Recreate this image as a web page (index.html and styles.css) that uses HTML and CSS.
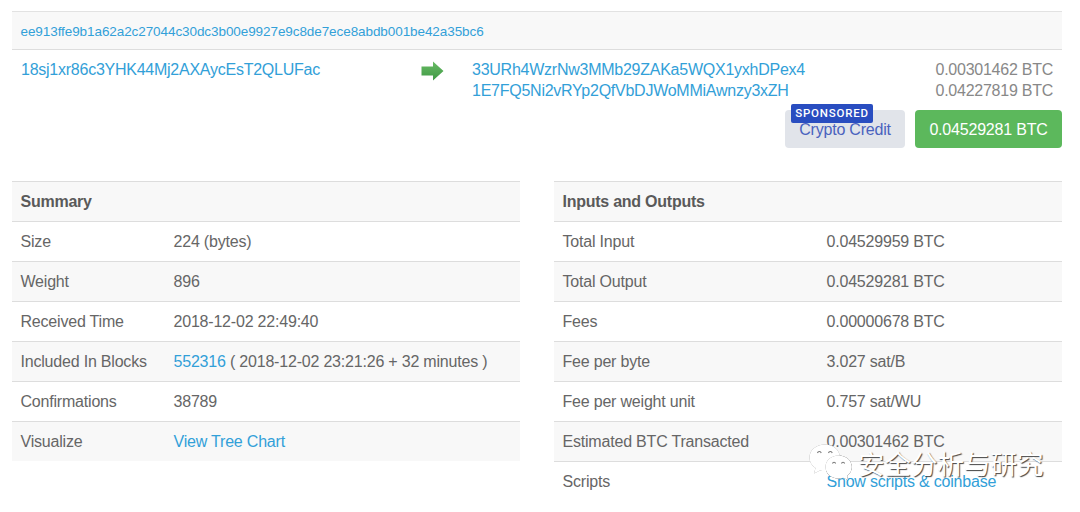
FILE: index.html
```html
<!DOCTYPE html>
<html lang="en">
<head>
<meta charset="utf-8">
<title>Transaction</title>
<link rel="stylesheet" href="styles.css">
</head>
<body>
<main class="page">
  <section class="tx">
    <div class="tx-head"><a class="hash">ee913ffe9b1a62a2c27044c30dc3b00e9927e9c8de7ece8abdb001be42a35bc6</a></div>
    <div class="tx-body">
      <div class="from"><a>18sj1xr86c3YHK44Mj2AXAycEsT2QLUFac</a></div>
      <svg class="arrow" width="24" height="22" viewBox="0 0 24 22">
        <defs><linearGradient id="g" x1="0" y1="0" x2="0" y2="1"><stop offset="0" stop-color="#68bb64"/><stop offset="1" stop-color="#3f9945"/></linearGradient></defs>
        <path d="M1.500 6.500H13V1.500L23.500 11L13 20.500V15.500H1.500Z" fill="url(#g)"/>
      </svg>
      <div class="to"><a>33URh4WzrNw3MMb29ZAKa5WQX1yxhDPex4</a><a>1E7FQ5Ni2vRYp2QfVbDJWoMMiAwnzy3xZH</a></div>
      <div class="amounts"><span>0.00301462 BTC</span><span>0.04227819 BTC</span></div>
    </div>
    <div class="actions">
      <div class="btn credit"><span class="label">Crypto Credit</span><span class="badge">SPONSORED</span></div>
      <div class="btn total">0.04529281 BTC</div>
    </div>
  </section>
  <div class="tables">
    <section class="table summary">
      <div class="row head">Summary</div>
      <div class="row"><span>Size</span><span>224 (bytes)</span></div>
      <div class="row"><span>Weight</span><span>896</span></div>
      <div class="row"><span>Received Time</span><span>2018-12-02 22:49:40</span></div>
      <div class="row"><span>Included In Blocks</span><span><a>552316</a> ( 2018-12-02 23:21:26 + 32 minutes )</span></div>
      <div class="row"><span>Confirmations</span><span>38789</span></div>
      <div class="row"><span>Visualize</span><a>View Tree Chart</a></div>
    </section>
    <section class="table io">
      <div class="row head">Inputs and Outputs</div>
      <div class="row"><span>Total Input</span><span>0.04529959 BTC</span></div>
      <div class="row"><span>Total Output</span><span>0.04529281 BTC</span></div>
      <div class="row"><span>Fees</span><span>0.00000678 BTC</span></div>
      <div class="row"><span>Fee per byte</span><span>3.027 sat/B</span></div>
      <div class="row"><span>Fee per weight unit</span><span>0.757 sat/WU</span></div>
      <div class="row"><span>Estimated BTC Transacted</span><span>0.00301462 BTC</span></div>
      <div class="row"><span>Scripts</span><a>Show scripts &amp; coinbase</a></div>
    </section>
  </div>
  <div class="watermark">
    <svg class="wechat" width="46" height="38" viewBox="0 0 46 38">
      <g class="bubbles" fill="#fff">
        <path d="M17 1.500C8 1.500 1.500 7 1.500 14.500C1.500 19 3.700 22.500 7.500 25L6 30.500L12 27.500C14 28 16 28.200 18 28C27 27.500 32.500 22 32 14C31.500 6.500 25 1.500 17 1.500Z"/>
        <path class="front" d="M30.500 12.500C23 12.500 17.500 17.500 17.500 24C17.500 30.500 23 35.500 30.500 35.500C32.200 35.500 33.800 35.200 35.200 34.700L40 37L39 32.800C42 30.800 43.800 27.500 43.800 24C43.800 17.500 38 12.500 30.500 12.500Z"/>
      </g>
      <g fill="none" stroke="#777" stroke-width="1.100"><path d="M9.500 10A1.900 1.900 0 0 1 13.200 10M20.500 10A1.900 1.900 0 0 1 24.200 10M24.500 20.500A1.600 1.600 0 0 1 27.600 20.500M33.500 20.500A1.600 1.600 0 0 1 36.600 20.500"/></g>
    </svg>
    <span class="wm-text" lang="zh">安全分析与研究</span>
  </div>
</main>
</body>
</html>
```
FILE: styles.css
```css
* { box-sizing: border-box; }
body { margin: 0; background: #fff; }
.page {
  position: relative;
  width: 1080px;
  height: 512px;
  overflow: hidden;
  padding: 11px 18px 0 12px;
  font: 16px/21px "Liberation Sans", Arial, sans-serif;
  letter-spacing: -.25px;
  color: #666;
}
a { color: #32a0d8; }
.tx { height: 170px; }
.tx-head {
  height: 39px;
  padding: 0 8.5px;
  background: #f8f8f8;
  border-top: 1px solid #e2e2e2;
  border-bottom: 1px solid #ddd;
  line-height: 37px;
}
.hash { font-size: 13.5px; letter-spacing: -.08px; }
.tx-body { display: flex; height: 60px; padding: 9px 9px 0; white-space: nowrap; }
.from { width: 399px; }
.arrow { flex: none; margin-top: 1px; }
.to { display: flex; flex-direction: column; margin-left: 28px; }
.amounts { display: flex; flex-direction: column; align-items: flex-end; margin-left: auto; color: #888; }
.actions { display: flex; justify-content: flex-end; gap: 10px; }
.btn { position: relative; height: 38px; border-radius: 4px; line-height: 39px; text-align: center; white-space: nowrap; letter-spacing: -.2px; }
.credit { width: 120px; background: #e1e4ea; color: #4a62be; }
.total { width: 147px; background: #5cb85c; color: #fff; }
.badge {
  position: absolute;
  left: 6px;
  top: -6px;
  width: 82px;
  height: 19px;
  border-radius: 2px;
  background: #294dc0;
  color: #fff;
  font: 500 11.5px/18px Roboto, sans-serif;
  letter-spacing: .8px;
}
.tables { display: flex; gap: 34px; align-items: flex-start; letter-spacing: -.2px; }
.table { width: 508px; }
.row {
  display: grid;
  grid-template-columns: 153px 1fr;
  height: 40px;
  padding: 0 8.5px;
  border-top: 1px solid #ddd;
  line-height: 39px;
  white-space: nowrap;
}
.io .row { grid-template-columns: 264px 1fr; }
.row:nth-child(odd) { background: #f8f8f8; }
.head { font-weight: bold; color: #5a5a5a; letter-spacing: -.25px; }
.watermark { position: absolute; left: 808px; top: 443px; display: flex; }
.bubbles { filter: drop-shadow(.5px .8px .5px #888); }
.front { filter: drop-shadow(0 0 .6px #888); }
.wm-text {
  margin: 1px 0 0 4px;
  font: 26.5px/38px "Noto Sans CJK SC", sans-serif;
  letter-spacing: 0;
  color: #fff;
  text-shadow: 1px 1px 1px #444;
}
```
